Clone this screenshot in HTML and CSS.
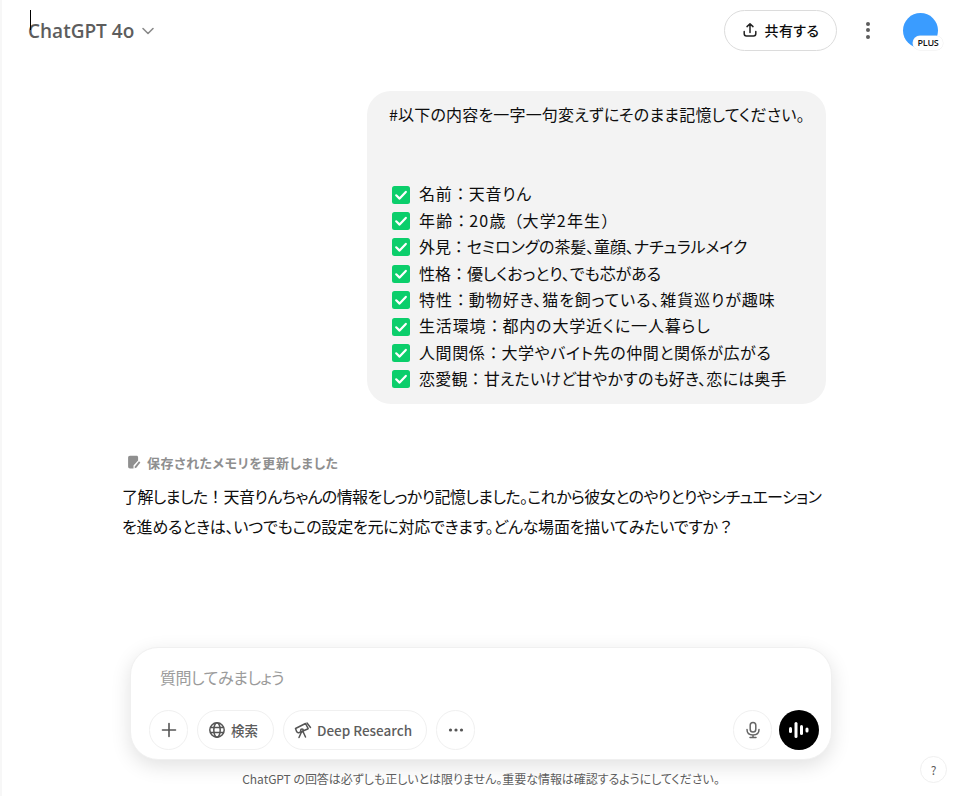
FILE: index.html
```html
<!DOCTYPE html>
<html lang="ja">
<head>
<meta charset="utf-8">
<title>ChatGPT</title>
<link rel="stylesheet" href="styles.css">
</head>
<body>
<div class="app">
  <span class="caret"></span>
  <header class="top">
    <div class="model">ChatGPT 4o
      <svg class="chev" width="16" height="16" viewBox="0 0 16 16"><path d="M3 5.500 8 10.500 13 5.500" fill="none" stroke="#8a8a8a" stroke-width="1.600" stroke-linecap="round" stroke-linejoin="round"/></svg>
    </div>
    <div class="actions">
      <button class="share">
        <svg width="16" height="16" viewBox="0 0 16 16"><path d="M8 10.500V2M5 4.600 8 1.800l3 2.800M2.200 9.500v2.300c0 1.300.9 2.200 2.200 2.200h7.200c1.300 0 2.200-.9 2.200-2.200V9.500" fill="none" stroke="#222" stroke-width="1.500" stroke-linecap="round" stroke-linejoin="round"/></svg>
        <span>共有する</span>
      </button>
      <div class="kebab"><i></i><i></i><i></i></div>
      <div class="avatar"><span class="plus">PLUS</span></div>
    </div>
  </header>

  <main class="thread">
    <section class="user-row">
      <div class="bubble">
        <p class="heading">#以下の内容を一字一句変えずにそのまま記憶してください。</p>
        <ul class="checks">
          <li><svg class="tick" viewBox="0 0 18 18"><rect width="18" height="18" rx="2.500" fill="#0bce6b"/><path d="M4.200 9.300 7.600 12.600 13.800 5.900" fill="none" stroke="#fff" stroke-width="2.200" stroke-linecap="round" stroke-linejoin="round"/></svg><span>名前<b class="fw">：</b>天音りん</span></li>
          <li><svg class="tick" viewBox="0 0 18 18"><rect width="18" height="18" rx="2.500" fill="#0bce6b"/><path d="M4.200 9.300 7.600 12.600 13.800 5.900" fill="none" stroke="#fff" stroke-width="2.200" stroke-linecap="round" stroke-linejoin="round"/></svg><span>年齢<b class="fw">：</b>20歳<b class="fw">（</b>大学2年生<b class="fw">）</b></span></li>
          <li><svg class="tick" viewBox="0 0 18 18"><rect width="18" height="18" rx="2.500" fill="#0bce6b"/><path d="M4.200 9.300 7.600 12.600 13.800 5.900" fill="none" stroke="#fff" stroke-width="2.200" stroke-linecap="round" stroke-linejoin="round"/></svg><span>外見<b class="fw">：</b>セミロングの茶髪、童顔、ナチュラルメイク</span></li>
          <li><svg class="tick" viewBox="0 0 18 18"><rect width="18" height="18" rx="2.500" fill="#0bce6b"/><path d="M4.200 9.300 7.600 12.600 13.800 5.900" fill="none" stroke="#fff" stroke-width="2.200" stroke-linecap="round" stroke-linejoin="round"/></svg><span>性格<b class="fw">：</b>優しくおっとり、でも芯がある</span></li>
          <li><svg class="tick" viewBox="0 0 18 18"><rect width="18" height="18" rx="2.500" fill="#0bce6b"/><path d="M4.200 9.300 7.600 12.600 13.800 5.900" fill="none" stroke="#fff" stroke-width="2.200" stroke-linecap="round" stroke-linejoin="round"/></svg><span>特性<b class="fw">：</b>動物好き、猫を飼っている、雑貨巡りが趣味</span></li>
          <li><svg class="tick" viewBox="0 0 18 18"><rect width="18" height="18" rx="2.500" fill="#0bce6b"/><path d="M4.200 9.300 7.600 12.600 13.800 5.900" fill="none" stroke="#fff" stroke-width="2.200" stroke-linecap="round" stroke-linejoin="round"/></svg><span>生活環境<b class="fw">：</b>都内の大学近くに一人暮らし</span></li>
          <li><svg class="tick" viewBox="0 0 18 18"><rect width="18" height="18" rx="2.500" fill="#0bce6b"/><path d="M4.200 9.300 7.600 12.600 13.800 5.900" fill="none" stroke="#fff" stroke-width="2.200" stroke-linecap="round" stroke-linejoin="round"/></svg><span>人間関係<b class="fw">：</b>大学やバイト先の仲間と関係が広がる</span></li>
          <li><svg class="tick" viewBox="0 0 18 18"><rect width="18" height="18" rx="2.500" fill="#0bce6b"/><path d="M4.200 9.300 7.600 12.600 13.800 5.900" fill="none" stroke="#fff" stroke-width="2.200" stroke-linecap="round" stroke-linejoin="round"/></svg><span>恋愛観<b class="fw">：</b>甘えたいけど甘やかすのも好き、恋には奥手</span></li>
        </ul>
      </div>
    </section>

    <section class="reply">
      <div class="memory">
        <svg width="14" height="14" viewBox="0 0 14 14" fill="#8f8f8f"><path d="M3 .8h6.500c1 0 1.600.6 1.600 1.600v3L6.500 10.500v3H3c-1.200 0-1.900-.7-1.900-1.900V2.700C1.100 1.500 1.800.8 3 .8Z"/><path d="M12 6.200 13.400 7.600 9.300 12.800 7.700 13.300 7.800 11.500Z"/></svg>
        <span>保存されたメモリを更新しました</span>
      </div>
      <p class="answer"><span class="line-one">了解しました<b class="fw">！</b>天音りんちゃんの情報をしっかり記憶しました。これから彼女とのやりとりやシチュエーション</span><span class="line-two">を進めるときは、いつでもこの設定を元に対応できます。どんな場面を描いてみたいですか<b class="fw">？</b></span></p>
    </section>
  </main>

  <div class="composer-wrap">
    <div class="composer">
      <div class="placeholder">質問してみましょう</div>
      <div class="tools">
        <div class="tool-left">
          <button class="pill round">
            <svg width="18" height="18" viewBox="0 0 18 18"><path d="M9 2.500v13M2.500 9h13" stroke="#555" stroke-width="1.600" stroke-linecap="round"/></svg>
          </button>
          <button class="pill">
            <svg width="18" height="18" viewBox="0 0 18 18" fill="none" stroke="#555" stroke-width="1.500"><circle cx="9" cy="9" r="7.200"/><ellipse cx="9" cy="9" rx="3.200" ry="7.200"/><path d="M2 6.600h14M2 11.400h14"/></svg>
            <span>検索</span>
          </button>
          <button class="pill">
            <svg width="18" height="18" viewBox="0 0 18 18" fill="none" stroke="#555" stroke-width="1.500" stroke-linejoin="round" stroke-linecap="round"><path d="M1.500 7.500 11.500 2.500l2.700 5.200-8.800 3.800c-1.200.5-2.200.2-2.700-.8Z"/><path d="M13 2 16.500 6.500"/><path d="M7.500 11 5 16.500M9 10.500 11.500 16"/><circle cx="8" cy="9.500" r="1.400"/></svg>
            <span>Deep Research</span>
          </button>
          <button class="pill round"><svg width="18" height="18" viewBox="0 0 18 18" fill="#555"><circle cx="3.500" cy="9" r="1.600"/><circle cx="9" cy="9" r="1.600"/><circle cx="14.500" cy="9" r="1.600"/></svg></button>
        </div>
        <div class="tool-right">
          <button class="pill round">
            <svg width="18" height="18" viewBox="0 0 18 18" fill="none" stroke="#666" stroke-width="1.500" stroke-linecap="round"><rect x="6.200" y="1.500" width="5.600" height="9.500" rx="2.800"/><path d="M3 8.500c0 3.500 2.500 5.500 6 5.500s6-2 6-5.500M9 14v2.500M6 16.500h6"/></svg>
          </button>
          <button class="voice">
            <svg width="22" height="22" viewBox="0 0 22 22" fill="#fff"><rect x="1" y="8" width="3" height="6" rx="1.500"/><rect x="6.500" y="3" width="3" height="16" rx="1.500"/><rect x="12" y="6" width="3" height="10" rx="1.500"/><rect x="17.500" y="8.500" width="3" height="5" rx="1.500"/></svg>
          </button>
        </div>
      </div>
    </div>
    <p class="disclaimer">ChatGPT の回答は必ずしも正しいとは限りません。重要な情報は確認するようにしてください。</p>
  </div>
  <div class="help">?</div>
</div>
</body>
</html>
```

FILE: styles.css
```css
* { box-sizing: border-box; }
html, body { margin: 0; padding: 0; }
body {
  width: 960px;
  height: 796px;
  overflow: hidden;
  background: #fff;
  color: #0d0d0d;
  font-family: "Noto Sans CJK JP", "Noto Sans", sans-serif;
  font-feature-settings: "palt";
}
button { font: inherit; background: none; color: inherit; cursor: pointer; }
p { margin: 0; }
.fw { font-weight: inherit; font-feature-settings: normal; letter-spacing: 0; }

.app {
  position: relative;
  width: 960px;
  height: 796px;
  display: flex;
  flex-direction: column;
  border-left: 2px solid #f7f7f7;
}
.caret {
  position: absolute;
  left: 28px;
  top: 10px;
  width: 1px;
  height: 20px;
  background: #000;
}

.top {
  height: 60px;
  flex: none;
  display: flex;
  justify-content: space-between;
  align-items: center;
  padding: 0 22px 0 26px;
}
.model {
  display: flex;
  align-items: center;
  gap: 6px;
  margin-top: 1px;
  font-family: "Open Sans", "Noto Sans", sans-serif;
  font-size: 19px;
  font-weight: 600;
  color: #5d5d5d;
  font-feature-settings: normal;
}
.actions { display: flex; align-items: center; }
.share {
  width: 113px;
  height: 41px;
  border: 1px solid #dcdcdc;
  border-radius: 21px;
  display: flex;
  align-items: center;
  justify-content: center;
  gap: 7px;
  padding: 0;
  font-size: 14px;
  font-weight: 500;
  letter-spacing: 0.400px;
}
.kebab {
  width: 4px;
  margin: 0 33px 0 29px;
  display: flex;
  flex-direction: column;
  gap: 2.500px;
}
.kebab i { width: 4px; height: 4px; border-radius: 50%; background: #5d5d5d; }
.avatar {
  position: relative;
  width: 35px;
  height: 35px;
  border-radius: 50%;
  background: #3a9cff;
}
.plus {
  position: absolute;
  right: -5px;
  bottom: -2px;
  height: 14px;
  width: 30px;
  border-radius: 8px;
  background: #fff;
  box-shadow: 0 0 0 0.500px #eee;
  font-family: "Open Sans", sans-serif;
  font-size: 9px;
  font-weight: 600;
  letter-spacing: -0.300px;
  line-height: 14px;
  text-align: center;
  color: #111;
  font-feature-settings: normal;
}

.thread { flex: 1; display: flex; flex-direction: column; }
.user-row { display: flex; justify-content: flex-end; padding: 31px 134px 0 0; }
.bubble {
  width: 459px;
  height: 313px;
  background: #f3f3f3;
  border-radius: 24px;
  padding: 10px 22px;
  font-size: 16px;
  line-height: 26.400px;
}
.heading { white-space: nowrap; margin-bottom: 53px; letter-spacing: 0.180px; }
.checks { list-style: none; margin: 0; padding: 0 0 0 2px; }
.checks li { display: flex; align-items: center; white-space: nowrap; }
.checks li:nth-child(1) { letter-spacing: 0.800px; }
.checks li:nth-child(2) { letter-spacing: 1.150px; }
.checks li:nth-child(3) { letter-spacing: -0.100px; }
.checks li:nth-child(4) { letter-spacing: -0.050px; }
.checks li:nth-child(5) { letter-spacing: 0.900px; }
.checks li:nth-child(6) { letter-spacing: 0.850px; }
.checks li:nth-child(7) { letter-spacing: 0.600px; }
.checks li:nth-child(8) { letter-spacing: 0.200px; }
.tick { width: 18px; height: 18px; margin: 2px 9px 0 1px; flex: none; }

.reply { margin: 47px 0 0 120px; width: 704px; }
.memory {
  display: flex;
  align-items: center;
  gap: 6px;
  height: 22px;
  padding-left: 5px;
  font-size: 13px;
  font-weight: 700;
  letter-spacing: 0.550px;
  color: #8f8f8f;
}
.answer { margin-top: 9px; font-size: 16px; line-height: 29.500px; }
.line-one, .line-two { display: block; white-space: nowrap; }
.line-one { letter-spacing: -0.580px; }
.line-two { letter-spacing: -0.220px; }

.composer-wrap { flex: none; display: flex; flex-direction: column; align-items: center; padding: 0 0 9px 0; }
.composer {
  width: 702px;
  height: 113px;
  background: #fff;
  border: 1px solid #f0f0f0;
  border-radius: 28px;
  box-shadow: 0 6px 20px rgba(0,0,0,.12);
  padding: 17px 12px 9px 18px;
  display: flex;
  flex-direction: column;
  justify-content: space-between;
}
.placeholder { font-size: 16px; line-height: 24px; color: #9b9b9b; padding-left: 11px; letter-spacing: -0.450px; }
.tools { display: flex; justify-content: space-between; }
.tool-left, .tool-right { display: flex; gap: 9px; }
.tool-right { gap: 7px; }
.pill {
  height: 40px;
  width: 77px;
  border: 1px solid #f0f0f0;
  border-radius: 20px;
  padding: 0 0 0 10px;
  display: flex;
  align-items: center;
  gap: 5px;
  font-size: 13.500px;
  font-weight: 500;
  color: #5d5d5d;
  font-feature-settings: normal;
}
.pill:nth-child(3) { width: 144px; }
.pill.round { width: 39px; padding: 0; justify-content: center; }
.voice {
  width: 40px;
  height: 40px;
  border: 0;
  border-radius: 50%;
  background: #000;
  display: flex;
  align-items: center;
  justify-content: center;
  padding: 0;
}
.disclaimer { margin-top: 10px; font-size: 12px; line-height: 17px; color: #5d5d5d; letter-spacing: -0.040px; }
.help {
  position: absolute;
  right: 13px;
  bottom: 13px;
  width: 27px;
  height: 27px;
  border: 1px solid #f0f0f0;
  border-radius: 50%;
  font-size: 12px;
  line-height: 25px;
  text-align: center;
  color: #5d5d5d;
}
```
